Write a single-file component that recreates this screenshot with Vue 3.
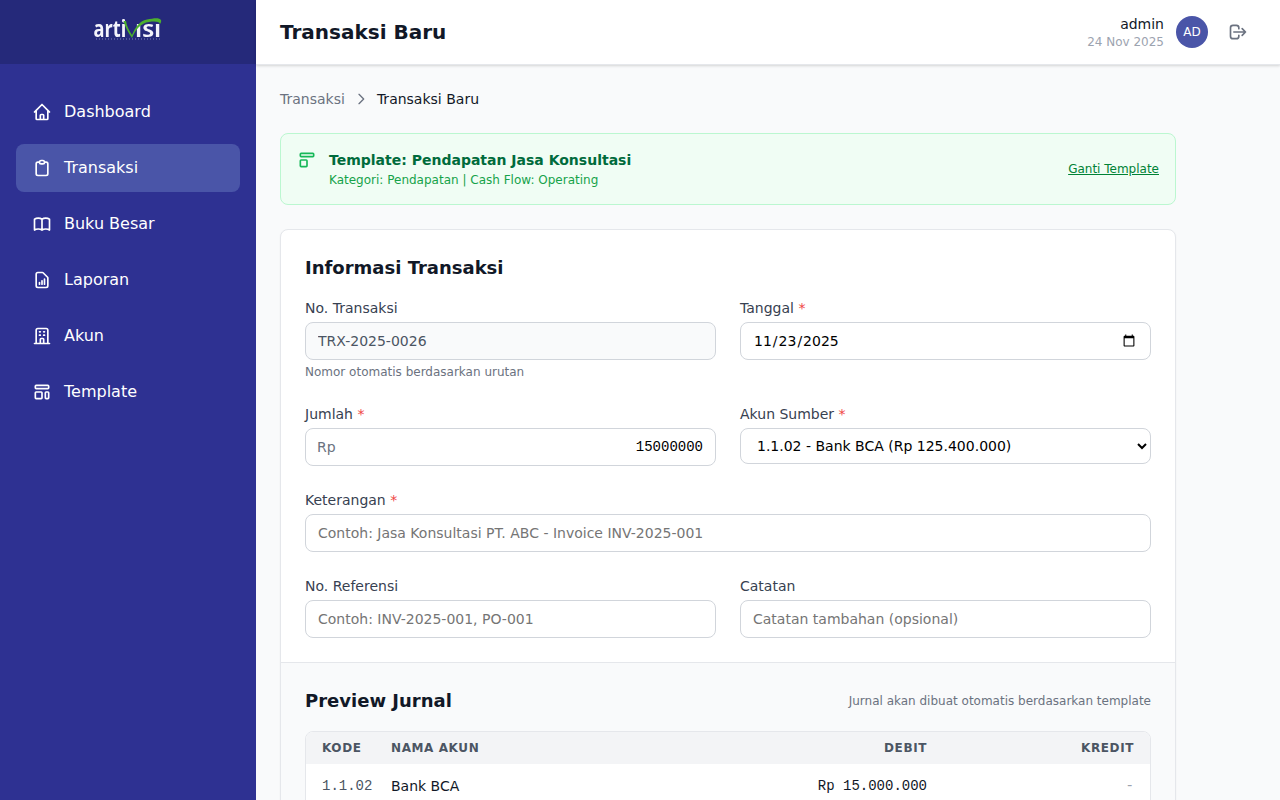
<template>
  <div class="app">
    <aside class="sidebar">
      <div class="brand">
        <svg class="logo" viewBox="0 0 70 30" role="img" aria-label="artiVisi">
          <text transform="translate(0.500 21) scale(0.76 1)" class="logo-word">arti</text>
          <text transform="translate(42 21) scale(1.2 1)" class="logo-word caps">ISI</text>
          <path d="M30.500 5 L33 5 C34 11 36.500 15 39 19 C42 12 46 5 54 3.500 C60 2.500 66 1 68 4 C68.500 5 68 7 67 8 C66 5.500 62 5 56 6 C48 7 43 13 39 22 C35 16 32 11 30.500 5 Z" fill="#4caf2e" />
          <line x1="3" y1="23" x2="67" y2="23" class="logo-dots" />
        </svg>
      </div>
      <nav class="nav">
        <a v-for="item in navItems" :key="item.label" class="nav-item" :class="{ active: item.active }">
          <svg class="nav-icon" viewBox="0 0 24 24" fill="none" stroke="currentColor" stroke-width="2" stroke-linecap="round" stroke-linejoin="round">
            <path :d="item.icon" />
          </svg>
          <span>{{ item.label }}</span>
        </a>
      </nav>
    </aside>

    <div class="main">
      <header class="topbar">
        <h1>Transaksi Baru</h1>
        <div class="user">
          <div class="user-text">
            <div class="user-name">admin</div>
            <div class="user-date">24 Nov 2025</div>
          </div>
          <div class="avatar">AD</div>
          <button class="logout" type="button" aria-label="Logout">
            <svg viewBox="0 0 24 24" fill="none" stroke="currentColor" stroke-width="2" stroke-linecap="round" stroke-linejoin="round">
              <path d="M17 16l4-4m0 0l-4-4m4 4H7m6 4v1a3 3 0 01-3 3H6a3 3 0 01-3-3V7a3 3 0 013-3h4a3 3 0 013 3v1" />
            </svg>
          </button>
        </div>
      </header>

      <main class="content">
        <div class="wrap">
          <div class="crumbs">
            <a>Transaksi</a>
            <svg viewBox="0 0 24 24" fill="none" stroke="currentColor" stroke-width="2" stroke-linecap="round" stroke-linejoin="round">
              <path d="M9 5l7 7-7 7" />
            </svg>
            <span>Transaksi Baru</span>
          </div>

          <div class="notice">
            <div class="notice-left">
              <svg viewBox="0 0 24 24" fill="none" stroke="currentColor" stroke-width="2" stroke-linecap="round" stroke-linejoin="round">
                <path d="M4 5a1 1 0 011-1h14a1 1 0 011 1v2a1 1 0 01-1 1H5a1 1 0 01-1-1V5zM4 13a1 1 0 011-1h6a1 1 0 011 1v6a1 1 0 01-1 1H5a1 1 0 01-1-1v-6z" />
              </svg>
              <div>
                <div class="notice-title">Template: Pendapatan Jasa Konsultasi</div>
                <div class="notice-sub">Kategori: Pendapatan | Cash Flow: Operating</div>
              </div>
            </div>
            <a class="notice-link">Ganti Template</a>
          </div>

          <section class="card">
            <div class="form">
              <h2>Informasi Transaksi</h2>
              <div class="grid">
                <div class="field">
                  <label>No. Transaksi</label>
                  <input class="input readonly" type="text" value="TRX-2025-0026" readonly />
                  <p class="hint">Nomor otomatis berdasarkan urutan</p>
                </div>
                <div class="field">
                  <label>Tanggal <em>*</em></label>
                  <input class="input date" type="date" value="2025-11-23" />
                </div>
                <div class="field">
                  <label>Jumlah <em>*</em></label>
                  <div class="money">
                    <span>Rp</span>
                    <input class="input amount" type="text" value="15000000" />
                  </div>
                </div>
                <div class="field">
                  <label>Akun Sumber <em>*</em></label>
                  <select class="input select">
                    <option>1.1.02 - Bank BCA (Rp 125.400.000)</option>
                  </select>
                </div>
                <div class="field wide">
                  <label>Keterangan <em>*</em></label>
                  <input class="input" type="text" placeholder="Contoh: Jasa Konsultasi PT. ABC - Invoice INV-2025-001" />
                </div>
                <div class="field">
                  <label>No. Referensi</label>
                  <input class="input" type="text" placeholder="Contoh: INV-2025-001, PO-001" />
                </div>
                <div class="field">
                  <label>Catatan</label>
                  <input class="input" type="text" placeholder="Catatan tambahan (opsional)" />
                </div>
              </div>
            </div>

            <div class="preview">
              <div class="preview-head">
                <h2>Preview Jurnal</h2>
                <span>Jurnal akan dibuat otomatis berdasarkan template</span>
              </div>
              <div class="table-box">
                <table>
                  <colgroup>
                    <col style="width: 69px" />
                    <col />
                    <col style="width: 207px" />
                    <col style="width: 207px" />
                  </colgroup>
                  <thead>
                    <tr>
                      <th>Kode</th>
                      <th>Nama Akun</th>
                      <th class="right">Debit</th>
                      <th class="right">Kredit</th>
                    </tr>
                  </thead>
                  <tbody>
                    <tr v-for="row in journal" :key="row.code">
                      <td class="code">{{ row.code }}</td>
                      <td>{{ row.name }}</td>
                      <td class="right num" :class="{ empty: row.debit === '-' }">{{ row.debit }}</td>
                      <td class="right num" :class="{ empty: row.credit === '-' }">{{ row.credit }}</td>
                    </tr>
                  </tbody>
                </table>
              </div>
            </div>
          </section>
        </div>
      </main>
    </div>
  </div>
</template>

<script setup>
const navItems = [
  { label: 'Dashboard', icon: 'M3 12l2-2m0 0l7-7 7 7M5 10v10a1 1 0 001 1h3m10-11l2 2m-2-2v10a1 1 0 01-1 1h-3m-6 0a1 1 0 001-1v-4a1 1 0 011-1h2a1 1 0 011 1v4a1 1 0 001 1m-6 0h6' },
  { label: 'Transaksi', active: true, icon: 'M9 5H7a2 2 0 00-2 2v12a2 2 0 002 2h10a2 2 0 002-2V7a2 2 0 00-2-2h-2M9 5a2 2 0 002 2h2a2 2 0 002-2M9 5a2 2 0 012-2h2a2 2 0 012 2' },
  { label: 'Buku Besar', icon: 'M12 6.253v13m0-13C10.832 5.477 9.246 5 7.5 5S4.168 5.477 3 6.253v13C4.168 18.477 5.754 18 7.5 18s3.332.477 4.500 1.253m0-13C13.168 5.477 14.754 5 16.500 5c1.747 0 3.332.477 4.500 1.253v13C19.832 18.477 18.247 18 16.500 18c-1.746 0-3.332.477-4.500 1.253' },
  { label: 'Laporan', icon: 'M9 17v-2m3 2v-4m3 4v-6m2 10H7a2 2 0 01-2-2V5a2 2 0 012-2h5.586a1 1 0 01.707.293l5.414 5.414a1 1 0 01.293.707V19a2 2 0 01-2 2z' },
  { label: 'Akun', icon: 'M19 21V5a2 2 0 00-2-2H7a2 2 0 00-2 2v16m14 0h2m-2 0h-5m-9 0H3m2 0h5M9 7h1m-1 4h1m4-4h1m-1 4h1m-5 10v-5a1 1 0 011-1h2a1 1 0 011 1v5m-4 0h4' },
  { label: 'Template', icon: 'M4 5a1 1 0 011-1h14a1 1 0 011 1v2a1 1 0 01-1 1H5a1 1 0 01-1-1V5zM4 13a1 1 0 011-1h6a1 1 0 011 1v6a1 1 0 01-1 1H5a1 1 0 01-1-1v-6zM16 13a1 1 0 011-1h2a1 1 0 011 1v6a1 1 0 01-1 1h-2a1 1 0 01-1-1v-6z' }
]

const journal = [
  { code: '1.1.02', name: 'Bank BCA', debit: 'Rp 15.000.000', credit: '-' }
]
</script>

<style>
html,
body {
  margin: 0;
  height: 100%;
  overflow: hidden;
}
</style>

<style scoped>
.app {
  display: flex;
  height: 100vh;
  overflow: hidden;
  font-family: "DejaVu Sans", sans-serif;
  font-size: 14px;
  line-height: 20px;
  color: #111827;
  background: #f9fafb;
}

.sidebar {
  flex: 0 0 256px;
  width: 256px;
  background: #2e3192;
  color: #fff;
}

.brand {
  height: 64px;
  display: flex;
  justify-content: center;
  align-items: flex-start;
  background: #25297a;
}

.logo {
  width: 70px;
  height: 30px;
  margin-top: 16px;
  display: block;
  overflow: visible;
  filter: blur(0.3px);
}

.logo-word {
  font-family: "Open Sans", sans-serif;
  font-size: 24px;
  font-weight: 700;
  fill: #f4f4fb;
}

.logo-word.caps {
  font-size: 18px;
}

.logo-dots {
  stroke: #8d90c4;
  stroke-width: 1.500;
  stroke-dasharray: 1 2;
  opacity: 0.6;
}

.nav {
  padding: 24px 16px;
  display: flex;
  flex-direction: column;
  gap: 8px;
}

.nav-item {
  display: flex;
  align-items: center;
  gap: 12px;
  padding: 12px 16px;
  border-radius: 8px;
  font-size: 16px;
  line-height: 24px;
}

.nav-item.active {
  background: #4a55a8;
}

.nav-icon {
  width: 20px;
  height: 20px;
  flex: none;
}

.main {
  flex: 1;
  min-width: 0;
  display: flex;
  flex-direction: column;
}

.topbar {
  flex: none;
  height: 64px;
  padding: 0 24px;
  display: flex;
  align-items: center;
  justify-content: space-between;
  background: #fff;
  border-bottom: 1px solid #e5e7eb;
  box-shadow: 0 1px 3px rgba(0, 0, 0, 0.1), 0 1px 2px rgba(0, 0, 0, 0.06);
  position: relative;
}

.topbar h1 {
  margin: 0;
  font-size: 20px;
  line-height: 28px;
  font-weight: 700;
}

.user {
  display: flex;
  align-items: center;
  gap: 12px;
}

.user-text {
  text-align: right;
}

.user-name {
  font-size: 14px;
  line-height: 20px;
}

.user-date {
  font-size: 12px;
  line-height: 16px;
  color: #9ca3af;
}

.avatar {
  width: 32px;
  height: 32px;
  border-radius: 50%;
  background: #4a55a8;
  color: #fff;
  font-size: 12px;
  display: flex;
  align-items: center;
  justify-content: center;
}

.logout {
  width: 36px;
  height: 36px;
  padding: 8px;
  border: 0;
  background: none;
  color: #6b7280;
}

.logout svg {
  width: 20px;
  height: 20px;
  display: block;
}

.content {
  flex: 1;
  min-height: 0;
  overflow: hidden;
  padding: 24px;
}

.wrap {
  max-width: 896px;
}

.crumbs {
  display: flex;
  align-items: center;
  gap: 8px;
  margin-bottom: 24px;
  color: #6b7280;
}

.crumbs svg {
  width: 16px;
  height: 16px;
  color: #6b7280;
}

.crumbs span {
  color: #111827;
}

.notice {
  display: flex;
  align-items: center;
  justify-content: space-between;
  padding: 16px;
  margin-bottom: 24px;
  background: #f0fdf4;
  border: 1px solid #bbf7d0;
  border-radius: 8px;
}

.notice-left {
  display: flex;
  align-items: flex-start;
  gap: 12px;
}

.notice-left svg {
  width: 20px;
  height: 20px;
  flex: none;
  color: #16b858;
}

.notice-title {
  font-weight: 700;
  color: #006b3c;
}

.notice-sub {
  margin-top: 2px;
  font-size: 12px;
  line-height: 16px;
  color: #16a34a;
}

.notice-link {
  font-size: 12px;
  line-height: 16px;
  color: #008236;
  text-decoration: underline;
}

.card {
  background: #fff;
  border: 1px solid #e5e7eb;
  border-radius: 8px;
  box-shadow: 0 1px 2px rgba(0, 0, 0, 0.05);
  overflow: hidden;
}

.form {
  padding: 24px;
}

h2 {
  margin: 0;
  font-size: 18px;
  line-height: 28px;
  font-weight: 700;
}

.form h2 {
  margin-bottom: 16px;
}

.grid {
  display: grid;
  grid-template-columns: 1fr 1fr;
  gap: 24px;
}

.field {
  min-width: 0;
}

.field.wide {
  grid-column: 1 / -1;
}

label {
  display: block;
  margin-bottom: 4px;
  color: #374151;
}

label em {
  font-style: normal;
  color: #ef4444;
}

.input {
  display: block;
  box-sizing: border-box;
  width: 100%;
  height: 38px;
  padding: 8px 12px;
  border: 1px solid #d1d5db;
  border-radius: 8px;
  background: #fff;
  color: #111827;
  font-family: inherit;
  font-size: 14px;
  line-height: 20px;
}

.input::placeholder {
  color: #757575;
  opacity: 1;
}

.readonly {
  background: #f9fafb;
  color: #4b5563;
}

.date {
  color: #000;
}

.select {
  height: 36px;
  color: #000;
}

.hint {
  margin: 4px 0 0;
  font-size: 12px;
  line-height: 16px;
  color: #6b7280;
}

.money {
  position: relative;
}

.money span {
  position: absolute;
  left: 12px;
  top: 9px;
  color: #6b7280;
}

.amount {
  text-align: right;
  font-family: "Liberation Mono", monospace;
  color: #000;
}

.preview {
  padding: 24px;
  background: #f9fafb;
  border-top: 1px solid #e5e7eb;
}

.preview-head {
  display: flex;
  align-items: center;
  justify-content: space-between;
  margin-bottom: 16px;
}

.preview-head span {
  font-size: 12px;
  line-height: 16px;
  color: #6b7280;
}

.table-box {
  border: 1px solid #e5e7eb;
  border-radius: 8px;
  background: #fff;
  overflow: hidden;
}

table {
  width: 100%;
  table-layout: fixed;
  border-collapse: collapse;
}

th {
  padding: 8px 16px;
  background: #f3f4f6;
  font-size: 12px;
  line-height: 16px;
  font-weight: 700;
  letter-spacing: 0.05em;
  text-transform: uppercase;
  text-align: left;
  color: #4b5563;
  white-space: nowrap;
}

td {
  padding: 12px 16px;
  color: #111827;
  white-space: nowrap;
  border-bottom: 1px solid #f3f4f6;
}

th.right,
td.right {
  text-align: right;
}

.code,
.num {
  font-family: "Liberation Mono", monospace;
}

.code {
  color: #4b5563;
}

.empty {
  color: #9ca3af;
}
</style>
